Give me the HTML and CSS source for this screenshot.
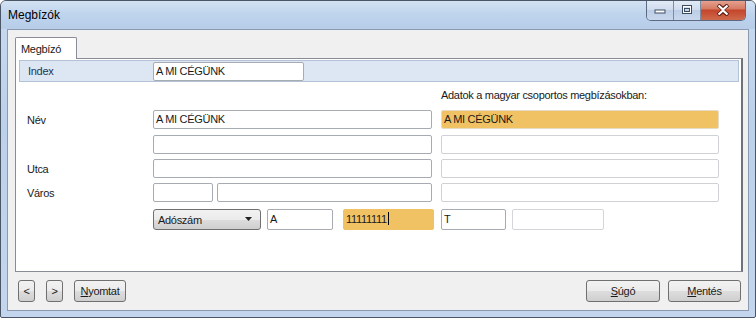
FILE: index.html
```html
<!DOCTYPE html>
<html lang="hu">
<head>
    <meta charset="UTF-8" />
    <title>Megbízók</title>
    <link rel="stylesheet" href="styles.css">
</head>
<body>
    <div class="window">
        <div class="titlebar">
            <span class="title">Megbízók</span>
            <div class="caption-buttons">
                <div class="cap cap-min">
                    <svg width="14" height="8" viewBox="0 0 14 8"><rect x="2" y="4" width="10" height="3" fill="#fff" stroke="#3b4c63" stroke-width="1"/></svg>
                </div>
                <div class="cap cap-max">
                    <svg width="14" height="12" viewBox="0 0 14 12"><rect x="2.5" y="1.5" width="9" height="8" fill="none" stroke="#3b4c63" stroke-width="1"/><rect x="3.5" y="2.5" width="7" height="6" fill="none" stroke="#fff" stroke-width="1"/><rect x="4.5" y="4.5" width="5" height="3" fill="none" stroke="#3b4c63" stroke-width="1"/></svg>
                </div>
                <div class="cap cap-close">
                    <svg width="16" height="12" viewBox="0 0 16 12"><path d="M3 1 L8 5 L13 1 M3 11 L8 7 L13 11" fill="none" stroke="#5a1a10" stroke-width="4"/><path d="M3.5 1.5 L8 5.5 L12.5 1.5 M3.5 10.5 L8 6.5 L12.5 10.5" fill="none" stroke="#fff" stroke-width="2.2"/></svg>
                </div>
            </div>
        </div>

        <div class="client">
            <div class="tabs">
                <div class="tab">Megbízó</div>
            </div>

            <div class="panel">
                <div class="band">
                    <span class="label">Index</span>
                    <div class="field f-index">A MI CÉGÜNK</div>
                </div>

                <div class="heading">Adatok a magyar csoportos megbízásokban:</div>

                <div class="row r1">
                    <span class="label">Név</span>
                    <div class="field f-wide">A MI CÉGÜNK</div>
                    <div class="field f-right hl">A MI CÉGÜNK</div>
                </div>
                <div class="row r2">
                    <span class="label"></span>
                    <div class="field f-wide"></div>
                    <div class="field f-right"></div>
                </div>
                <div class="row r3">
                    <span class="label">Utca</span>
                    <div class="field f-wide"></div>
                    <div class="field f-right"></div>
                </div>
                <div class="row r4">
                    <span class="label">Város</span>
                    <div class="field f-zip"></div>
                    <div class="field f-city"></div>
                    <div class="field f-right"></div>
                </div>
                <div class="row r5">
                    <span class="label"></span>
                    <div class="select">
                        <span>Adószám</span>
                        <svg width="8" height="5" viewBox="0 0 8 5"><path d="M0 0 H7 L3.5 4 Z" fill="#222"/></svg>
                    </div>
                    <div class="field f-a">A</div>
                    <div class="field f-num">11111111<span class="caret"></span></div>
                    <div class="field f-t">T</div>
                    <div class="field f-last"></div>
                </div>
            </div>

            <div class="footer">
                <button class="btn btn-nav">&lt;</button>
                <button class="btn btn-nav">&gt;</button>
                <button class="btn btn-print"><u>N</u>yomtat</button>
                <span class="spacer"></span>
                <button class="btn btn-help"><u>S</u>úgó</button>
                <button class="btn btn-save"><u>M</u>entés</button>
            </div>
        </div>
    </div>
</body>
</html>
```

FILE: styles.css
```css
body {
    margin: 0;
    font-family: "Liberation Sans", Arial, sans-serif;
    font-size: 11px;
    letter-spacing: -0.3px;
    color: #1a1a1a;
    background: #fff;
}

.window {
    width: 756px;
    height: 318px;
    box-sizing: border-box;
    border: 1px solid #4a5565;
    border-radius: 6px 6px 2px 2px;
    background: linear-gradient(to bottom, #c7daf0 0%, #bcd1ea 40%, #c3d6ed 100%);
    display: flex;
    flex-direction: column;
    overflow: hidden;
}

.titlebar {
    height: 28px;
    display: flex;
    align-items: flex-start;
    padding-left: 7px;
    padding-right: 9px;
    background: linear-gradient(to bottom, #d3e2f3 0%, #bed3ec 50%, #b7cde8 100%);
}

.title {
    font-size: 12px;
    letter-spacing: 0;
    margin-top: 7px;
    color: #000;
}

.caption-buttons {
    margin-left: auto;
    margin-top: -1px;
    display: flex;
    height: 20px;
    border: 1px solid #5b6a80;
    border-top: none;
    border-radius: 0 0 5px 5px;
    overflow: hidden;
}

.cap {
    height: 20px;
    display: flex;
    align-items: center;
    justify-content: center;
}

.cap-min,
.cap-max {
    width: 26px;
    background: linear-gradient(to bottom, #e3ecf7 0%, #cfdcee 50%, #bccde6 51%, #c9d8ec 100%);
    border-right: 1px solid #7d8ca3;
}

.cap-close {
    width: 44px;
    background: linear-gradient(to bottom, #e8a594 0%, #d57a63 45%, #c3452c 50%, #cf6a4c 100%);
}

.client {
    margin: 0 6px 6px 6px;
    flex: 1;
    border: 1px solid #8a9ab0;
    background: #f0f0f0;
    display: flex;
    flex-direction: column;
}

.tabs {
    display: flex;
    padding: 7px 0 0 7px;
}

.tab {
    width: 62px;
    height: 22px;
    box-sizing: border-box;
    border: 1px solid #898c95;
    border-bottom: none;
    border-radius: 2px 2px 0 0;
    background: #fff;
    padding: 5px 0 0 5px;
    margin-bottom: -1px;
    position: relative;
    z-index: 1;
}

.panel {
    margin-left: 7px;
    width: 728px;
    height: 214px;
    box-sizing: border-box;
    border: 1px solid #898c95;
    border-right: 2px solid #6f7278;
    background: #fff;
    padding: 1px 2px 0 3px;
}

.band {
    height: 22px;
    box-sizing: border-box;
    border: 1px solid #b3c2d6;
    background: #dde7f4;
    display: flex;
    align-items: center;
}

.band .label {
    width: 133px;
    color: #1b3556;
}

.label {
    width: 134px;
    box-sizing: border-box;
    padding-left: 8px;
    flex: none;
}

.heading {
    margin: 7px 0 0 422px;
    height: 13px;
    line-height: 13px;
}

.row {
    display: flex;
    align-items: center;
}

.r1 { margin-top: 8px; }
.r2 { margin-top: 6px; }
.r3 { margin-top: 5px; }
.r4 { margin-top: 5px; }
.r5 { margin-top: 7px; }

.field {
    height: 19px;
    box-sizing: border-box;
    border: 1px solid #a7abb2;
    border-radius: 2px;
    background: #fff;
    padding: 0 2px;
    line-height: 17px;
    white-space: nowrap;
    flex: none;
}

.f-index { width: 151px; }
.f-wide { width: 279px; }
.f-right {
    width: 278px;
    margin-left: 9px;
    border-color: #cfd1d5;
}
.f-zip { width: 60px; }
.f-city { width: 215px; margin-left: 4px; }

.hl {
    background: #f1c263;
    border-color: #e6dcc6;
}

.r5 .field {
    height: 21px;
    line-height: 19px;
}

.select {
    width: 108px;
    height: 21px;
    box-sizing: border-box;
    border: 1px solid #707070;
    border-radius: 3px;
    background: linear-gradient(to bottom, #f2f2f2 0%, #ebebeb 50%, #dddddd 51%, #cfcfcf 100%);
    display: flex;
    align-items: center;
    justify-content: space-between;
    padding: 0 7px 0 4px;
    flex: none;
}

.f-a { width: 66px; margin-left: 6px; }
.f-num {
    width: 91px;
    margin-left: 10px;
    background: #f1c263;
    border-color: #f1c263;
}
.f-t { width: 65px; margin-left: 7px; }
.f-last {
    width: 92px;
    margin-left: 6px;
    border-color: #d3d5d8;
}

.caret {
    display: inline-block;
    width: 1px;
    height: 13px;
    background: #000;
    vertical-align: -2px;
    margin-left: 1px;
}

.footer {
    display: flex;
    align-items: flex-start;
    padding: 8px 7px 0 10px;
}

.btn {
    height: 22px;
    box-sizing: border-box;
    border: 1px solid #707070;
    border-radius: 3px;
    background: linear-gradient(to bottom, #f2f2f2 0%, #ebebeb 50%, #dddddd 51%, #cfcfcf 100%);
    font-family: "Liberation Sans", Arial, sans-serif;
    font-size: 11px;
    letter-spacing: -0.3px;
    color: #1a1a1a;
    padding: 0;
    margin: 0;
}

.btn-nav { width: 17px; margin-right: 11px; }
.btn-print { width: 52px; }
.spacer { flex: 1; }
.btn-help { width: 74px; margin-right: 8px; }
.btn-save { width: 73px; }
```
